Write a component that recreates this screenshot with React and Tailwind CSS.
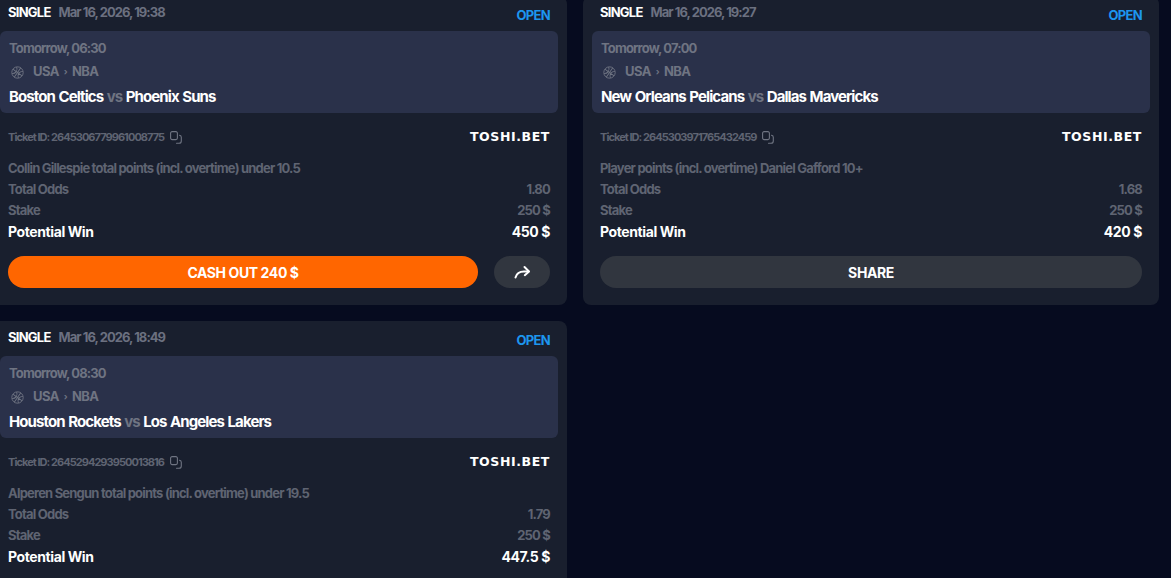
const tickets = [
  {
    date: "Mar 16, 2026, 19:38",
    time: "Tomorrow, 06:30",
    home: "Boston Celtics",
    away: "Phoenix Suns",
    id: "2645306779961008775",
    market: "Collin Gillespie total points (incl. overtime) under 10.5",
    odds: "1.80",
    win: "450 $",
    cashout: "CASH OUT 240 $",
  },
  {
    date: "Mar 16, 2026, 19:27",
    time: "Tomorrow, 07:00",
    home: "New Orleans Pelicans",
    away: "Dallas Mavericks",
    id: "2645303971765432459",
    market: "Player points (incl. overtime) Daniel Gafford 10+",
    odds: "1.68",
    win: "420 $",
  },
  {
    date: "Mar 16, 2026, 18:49",
    time: "Tomorrow, 08:30",
    home: "Houston Rockets",
    away: "Los Angeles Lakers",
    id: "2645294293950013816",
    market: "Alperen Sengun total points (incl. overtime) under 19.5",
    odds: "1.79",
    win: "447.5 $",
  },
];

const Ball = () => (
  <svg width="13" height="13" viewBox="0 0 24 24" fill="none" stroke="#6f7482" strokeWidth="1.700">
    <circle cx="12" cy="12" r="10.500" />
    <g transform="rotate(35 12 12)">
      <path d="M12 1.500v21M1.500 12h21M5 4.500c2.700 2 4.200 4.500 4.200 7.500s-1.500 5.500-4.200 7.500M19 4.500c-2.700 2-4.200 4.500-4.200 7.500s1.500 5.500 4.200 7.500" />
    </g>
  </svg>
);

const CopyIcon = () => (
  <svg width="12" height="13" viewBox="0 0 12 13" fill="none" stroke="#6f7482" strokeWidth="1.100" strokeLinecap="round">
    <rect x="0.600" y="0.600" width="6.800" height="8" rx="1.500" />
    <path d="M9.500 4.200c1 .2 1.800 .8 1.800 2v3.800c0 1.400-.9 2.300-2.300 2.300h-2.500" />
  </svg>
);

const ShareArrow = () => (
  <svg width="17" height="14" viewBox="0 0 17 14" fill="none" stroke="#fff" strokeWidth="2" strokeLinecap="round" strokeLinejoin="round">
    <path d="M1.500 12.500c1-3.700 4-5.900 8.500-5.900h4.500" />
    <path d="M10.500 2l4.500 4.500-4.200 3.700" />
  </svg>
);

const Row = ({ label, value }) => (
  <div className="flex justify-between h-[21px] items-center text-[13px] font-bold tracking-[-0.8px] text-[#5f6472]">
    <span>{label}</span>
    <span>{value}</span>
  </div>
);

const Card = ({ t }) => (
  <div className="h-[309px] rounded-lg bg-[#191f2e] px-[17px]">
    <div className="flex justify-between h-[35px] pt-[8px]">
      <div className="flex items-center h-[17px] gap-[8px] text-[13px] font-bold tracking-[-0.75px]">
        <span className="text-white">SINGLE</span>
        <span className="text-[#6b7080] tracking-[-0.95px]">{t.date}</span>
      </div>
      <span className="text-[13px] font-bold tracking-[-0.7px] text-[#1d96ee] mt-[3px] leading-[16px]">OPEN</span>
    </div>

    <div className="-mx-[8px] h-[82px] rounded-md bg-[#2a314a] pl-[9px] pt-[9px]">
      <div className="text-[13px] h-[16px] leading-[16px] font-bold tracking-[-0.85px] text-[#6f7482]">{t.time}</div>
      <div className="flex items-center h-[16px] mt-[8px] gap-[5px] text-[13px] font-bold tracking-[-0.6px] text-[#6f7482]">
        <span className="ml-[2px] mr-[4px]"><Ball /></span>
        <span>USA</span>
        <span className="text-[9px]">›</span>
        <span>NBA</span>
      </div>
      <div className="mt-[8px] h-[18px] leading-[18px] text-[15px] font-bold tracking-[-0.9px] [word-spacing:0.8px] text-white">
        {t.home} <span className="text-[#6f7482]">vs</span> {t.away}
      </div>
    </div>

    <div className="flex justify-between items-center mt-[14px] h-[20px]">
      <div className="flex items-center gap-[6px] text-[11px] font-bold tracking-[-0.95px] text-[#5f6472]">
        <span>Ticket ID: {t.id}</span>
        <CopyIcon />
      </div>
      <span className="text-[12.5px] font-bold tracking-[0.6px] text-white" style={{ fontFamily: "'DejaVu Sans', sans-serif" }}>TOSHI.BET</span>
    </div>

    <div className="mt-[11px]">
      <div className="h-[21px] flex items-center text-[13px] font-bold tracking-[-0.8px] text-[#5f6472]">{t.market}</div>
      <Row label="Total Odds" value={t.odds} />
      <Row label="Stake" value="250 $" />
      <div className="flex justify-between h-[21px] items-center text-[14px] font-bold tracking-[-0.4px] text-white">
        <span>Potential Win</span>
        <span>{t.win}</span>
      </div>
    </div>

    <div className="flex gap-[16px] mt-[14px]">
      {t.cashout ? (
        <>
          <button className="flex-1 h-[32px] rounded-full bg-[#ff6600] text-white text-[14px] font-bold tracking-[-0.4px]">{t.cashout}</button>
          <button className="w-[56px] h-[32px] rounded-full bg-[#31363f] flex items-center justify-center">
            <ShareArrow />
          </button>
        </>
      ) : (
        <button className="flex-1 h-[32px] rounded-full bg-[#31363f] text-white text-[14px] font-bold tracking-[-0.4px]">SHARE</button>
      )}
    </div>
  </div>
);

export default function App() {
  return (
    <div className="w-[1171px] h-[578px] overflow-hidden bg-[#060b1f]" style={{ fontFamily: "Inter, sans-serif" }}>
      <div className="grid grid-cols-[576px_576px] gap-[16px] -ml-[9px] -mt-[4px]">
        {tickets.map((t) => (
          <Card key={t.id} t={t} />
        ))}
      </div>
    </div>
  );
}
